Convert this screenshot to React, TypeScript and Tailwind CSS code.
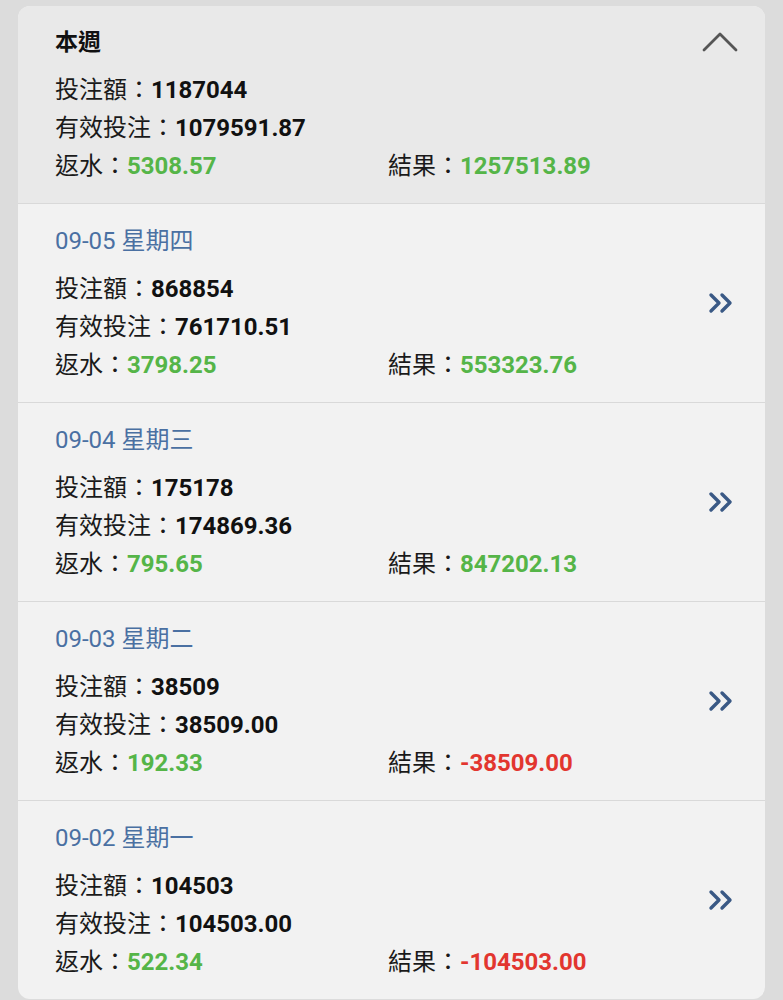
import React from 'react';

interface DayRow {
    date: string;
    bet: string;
    valid: string;
    rebate: string;
    result: string;
}

const rows: DayRow[] = [
    { date: '09-05 星期四', bet: '868854', valid: '761710.51', rebate: '3798.25', result: '553323.76' },
    { date: '09-04 星期三', bet: '175178', valid: '174869.36', rebate: '795.65', result: '847202.13' },
    { date: '09-03 星期二', bet: '38509', valid: '38509.00', rebate: '192.33', result: '-38509.00' },
    { date: '09-02 星期一', bet: '104503', valid: '104503.00', rebate: '522.34', result: '-104503.00' },
];

const font = { fontFamily: 'Roboto, "Noto Sans CJK TC", sans-serif' };

const Stats = ({ bet, valid, rebate, result }: Omit<DayRow, 'date'>) => {
    const negative = result.startsWith('-');
    return (
        <div className="text-[24px] text-[#1a1a1a]">
            <div className="h-[38px] leading-[38px]">投注額：<b className="font-bold text-[#111]">{bet}</b></div>
            <div className="h-[38px] leading-[38px]">有效投注：<b className="font-bold text-[#111]">{valid}</b></div>
            <div className="grid h-[38px] grid-cols-[333px_1fr] leading-[38px]">
                <div>返水：<b className="font-bold text-[#55b548]">{rebate}</b></div>
                <div>結果：<b className={negative ? 'font-bold text-[#e2362f]' : 'font-bold text-[#55b548]'}>{result}</b></div>
            </div>
        </div>
    );
};

const DoubleChevron = () => (
    <svg width="26" height="22" viewBox="0 0 26 22" fill="none" stroke="#3a5985" strokeWidth="3.4" strokeLinecap="round" strokeLinejoin="round">
        <path d="M3 3 L11 11 L3 19" />
        <path d="M14 3 L22 11 L14 19" />
    </svg>
);

export default function App() {
    return (
        <div className="min-h-[1000px] bg-[#dcdcdc] px-[18px] pt-[6px] pb-[4px]" style={font}>
            <div className="overflow-hidden rounded-[12px] bg-[#f2f2f2]">
                <div className="bg-[#e9e9e9] pt-[18px] pr-[26px] pb-[18px] pl-[37px]">
                    <div className="flex h-[38px] items-center justify-between">
                        <span className="text-[23px] font-bold text-[#111]">本週</span>
                        <svg width="38" height="22" viewBox="0 0 38 22" fill="none" stroke="#555" strokeWidth="2.8" strokeLinecap="round" strokeLinejoin="round" className="-mt-[2px]">
                            <path d="M3 19 L19 3 L35 19" />
                        </svg>
                    </div>
                    <div className="mt-[9px]">
                        <Stats bet="1187044" valid="1079591.87" rebate="5308.57" result="1257513.89" />
                    </div>
                </div>
                {rows.map(r => (
                    <div key={r.date} className="flex items-center border-t border-[#d9d9d9] pt-[18px] pr-[31px] pb-[18px] pl-[37px]">
                        <div className="flex-1">
                            <div className="h-[38px] text-[24px] leading-[38px] text-[#4a70a2]">{r.date}</div>
                            <div className="mt-[10px]">
                                <Stats bet={r.bet} valid={r.valid} rebate={r.rebate} result={r.result} />
                            </div>
                        </div>
                        <DoubleChevron />
                    </div>
                ))}
            </div>
        </div>
    );
}
